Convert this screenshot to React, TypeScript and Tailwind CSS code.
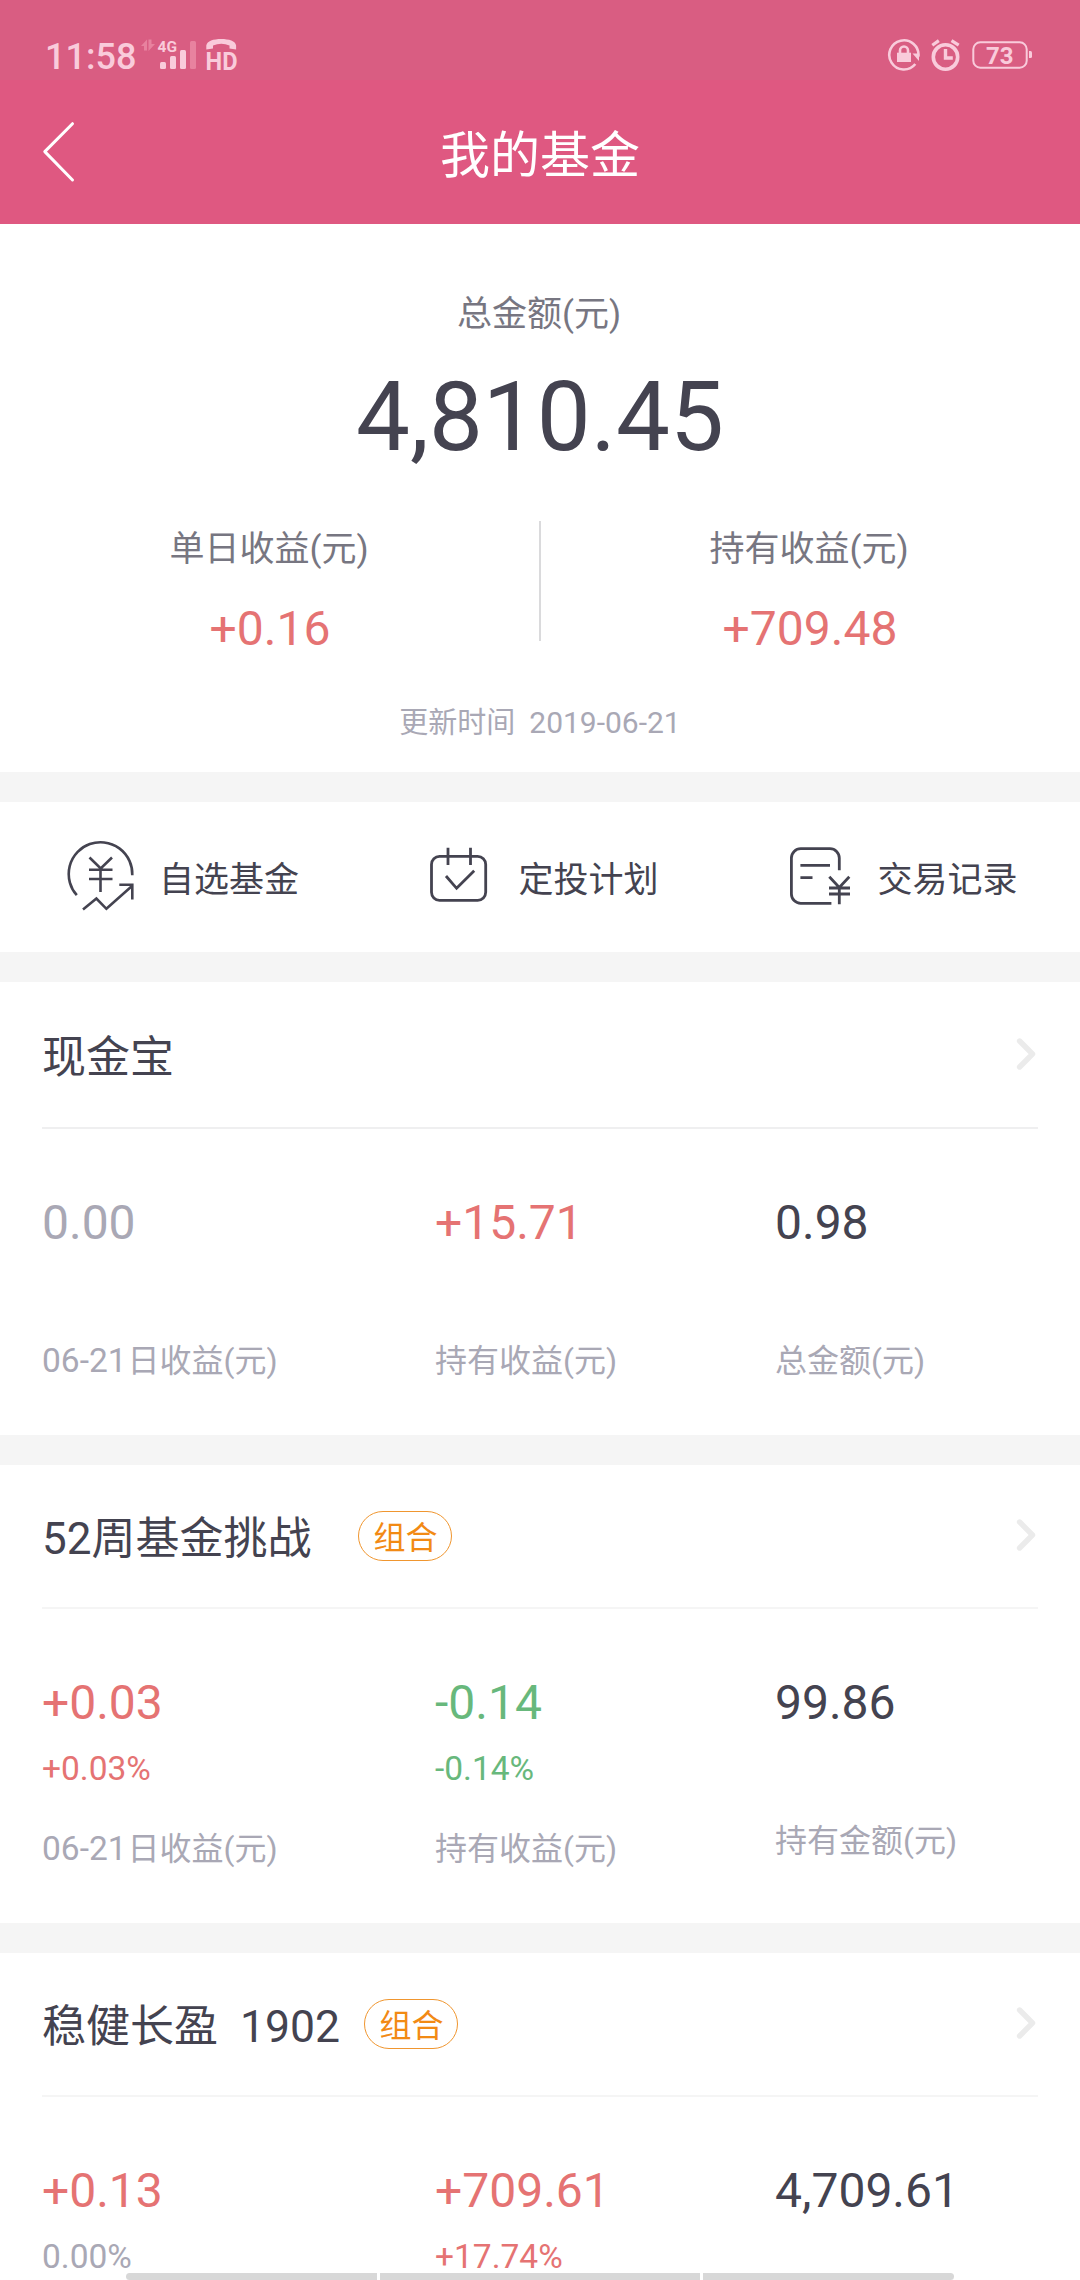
import React from "react";

type Tone = "up" | "down" | "flat" | "dark";

const toneClass: Record<Tone, string> = {
  up: "text-[#e57373]",
  down: "text-[#68b87c]",
  flat: "text-[#a9a8b5]",
  dark: "text-[#444350]",
};

interface Metric {
  value: string;
  tone: Tone;
  percent?: string;
  percentTone?: Tone;
  date?: string;
  label?: string;
}

function SignalIcon() {
  return (
    <svg width="58" height="46" viewBox="0 0 58 46" className="shrink-0">
      <g fill="#e8829f">
        <path d="M1 12L7 5.5V16.5H4V12Z" />
        <path d="M8.5 5.5H11.5V10H15L8.5 17Z" />
        <rect x="50" y="7" width="6" height="28" rx="1.5" />
      </g>
      <g fill="#f9cbdb">
        <text x="17.5" y="18" fontFamily="Roboto, sans-serif" fontWeight="700" fontSize="15.5">
          4G
        </text>
        <rect x="20" y="28" width="6" height="7" rx="1.5" />
        <rect x="30" y="22" width="6" height="13" rx="1.5" />
        <rect x="40" y="16" width="6" height="19" rx="1.5" />
      </g>
    </svg>
  );
}

function HdCallIcon() {
  return (
    <svg width="32" height="46" viewBox="0 0 32 46" className="shrink-0" fill="#f9cbdb">
      <path d="M0.3 15.5V11.5C1 7 7.5 5 15.2 5S29.6 7 30.1 11.5V15.5L23.5 14.5V11.5C18 9.3 12.5 9.3 7 11.5V14.5Z" />
      <text
        x="-0.5"
        y="35.8"
        fontFamily="Roboto, sans-serif"
        fontWeight="700"
        fontSize="26.5"
        textLength="32"
        lengthAdjust="spacingAndGlyphs"
      >
        HD
      </text>
    </svg>
  );
}

function RotationLockIcon() {
  return (
    <svg width="34" height="46" viewBox="0 0 34 46" className="shrink-0" fill="none" stroke="#f9cbdb">
      <path d="M31.4 22.5A14.6 14.6 0 1 0 28.3 30" strokeWidth="2.6" />
      <path d="M25.5 19.5H32V27Z" fill="#f9cbdb" stroke="none" />
      <rect x="10" y="18.7" width="14" height="9.3" fill="#f9cbdb" stroke="none" />
      <path d="M13 19V16.5A4 4 0 0 1 21 16.5V19" strokeWidth="2.6" />
    </svg>
  );
}

function AlarmIcon() {
  return (
    <svg width="30" height="46" viewBox="0 0 30 46" className="shrink-0" fill="none" stroke="#f9cbdb">
      <circle cx="14.5" cy="23" r="12.2" strokeWidth="3.6" />
      <path d="M14.5 15V24H21.8" strokeWidth="3.4" />
      <path d="M1.3 11.2L7.8 6.6M20.5 6.6L27.7 11.2" strokeWidth="3.2" />
    </svg>
  );
}

function BatteryIcon() {
  return (
    <svg width="62" height="46" viewBox="0 0 62 46" className="shrink-0">
      <rect x="2.3" y="8.3" width="53.4" height="25.4" rx="7" fill="none" stroke="#f9cbdb" strokeWidth="2" />
      <path d="M58 17H59.5Q61 17 61 18.5V22.5Q61 24 59.5 24H58Z" fill="#f9cbdb" />
      <text
        x="28.8"
        y="30"
        textAnchor="middle"
        fontFamily="Roboto, sans-serif"
        fontWeight="700"
        fontSize="24"
        fill="#f9cbdb"
      >
        73
      </text>
    </svg>
  );
}

function WatchlistIcon() {
  return (
    <svg width="78" height="78" viewBox="0 0 78 78" fill="none" stroke="#444350" strokeWidth="2.6">
      <path d="M71.3 38.3A31.8 31.8 0 1 0 15.8 58.2" />
      <path d="M28.5 20.5L39.7 31.5L51 20.5M28 32.7H51.5M28 42H51.5M39.5 31.5V55" />
      <path d="M22 72.5L35.4 61.5L45.4 71.8L71 49M58.3 47.7H71.3V62.5" />
    </svg>
  );
}

function PlanIcon() {
  return (
    <svg width="78" height="78" viewBox="0 0 78 78" fill="none" stroke="#444350" strokeWidth="2.8">
      <rect x="11.5" y="19.4" width="54.2" height="43.9" rx="8" />
      <path d="M28 10.7V28M50.5 10.7V28" />
      <path d="M26 39L36.6 51.3L54.2 33.7" />
    </svg>
  );
}

function RecordIcon() {
  return (
    <svg width="78" height="78" viewBox="0 0 78 78" fill="none" stroke="#444350" strokeWidth="2.8">
      <path d="M60.3 33.3V21A9.3 9.3 0 0 0 51 11.7H21.7A9.3 9.3 0 0 0 12.4 21V57A9.3 9.3 0 0 0 21.7 66.3H52.4" />
      <path d="M21.4 28.3H51M21.4 40.7H33.5" />
      <path d="M50.3 39.7L60.3 50.5L70.3 39.7M50 51H71M50 57H71M60.3 50V67.3" />
    </svg>
  );
}

function StatusBar() {
  return (
    <div className="flex h-20 items-start bg-[#d95d82] pt-[34px] text-[#f9cbdb]">
      <span className="w-[95px] pl-[45px] text-[36px] leading-[46px] font-medium whitespace-nowrap">11:58</span>
      <div className="ml-[45px] flex flex-1 gap-2">
        <SignalIcon />
        <HdCallIcon />
      </div>
      <div className="flex gap-[10px] pr-[47px]">
        <RotationLockIcon />
        <AlarmIcon />
        <BatteryIcon />
      </div>
    </div>
  );
}

function TitleBar() {
  return (
    <div className="grid h-36 grid-cols-[120px_1fr_120px] items-center bg-[#df5881]">
      <svg width="34" height="64" viewBox="0 0 34 64" className="ml-[42px]" fill="none" stroke="#fff">
        <path d="M30.5 3.7L2.8 31.6L30.5 60" strokeWidth="3" strokeLinecap="round" strokeLinejoin="round" />
      </svg>
      <h1 className="pt-[7px] text-center text-[50px] leading-[60px] text-white">我的基金</h1>
    </div>
  );
}

function SummaryColumn({ label, value }: { label: string; value: string }) {
  return (
    <div className="flex-1 text-center">
      <div className="pt-[9px] pr-[2px] text-[35px] leading-10 text-[#777681]">{label}</div>
      <div className="mt-[31px] text-[48px] leading-[56px] text-[#e57373]">{value}</div>
    </div>
  );
}

function Summary() {
  return (
    <section className="h-[548px] pt-[71px]">
      <div className="pr-[2px] text-center text-[35px] leading-10 text-[#777681]">总金额(元)</div>
      <div className="mt-[26px] text-center text-[96px] leading-[112px] text-[#444350]">4,810.45</div>
      <div className="mt-[48px] flex">
        <SummaryColumn label="单日收益(元)" value="+0.16" />
        <div className="-mx-px h-[120px] w-[2px] bg-[#dadadc]" />
        <SummaryColumn label="持有收益(元)" value="+709.48" />
      </div>
      <div className="mt-[46px] flex items-baseline justify-center gap-[14px] leading-10 text-[#a9a8b5]">
        <span className="text-[29px]">更新时间</span>
        <span className="text-[30px]">2019-06-21</span>
      </div>
    </section>
  );
}

function Action({ icon, label }: { icon: React.ReactNode; label: string }) {
  return (
    <div className="flex items-center justify-center gap-5">
      <div className="pb-[2px]">{icon}</div>
      <span className="pt-[7px] text-[35px] leading-10">{label}</span>
    </div>
  );
}

function MetricCell({ metric }: { metric: Metric }) {
  return (
    <div className="whitespace-nowrap">
      <div className={`text-[48px] leading-[56px] ${toneClass[metric.tone]}`}>{metric.value}</div>
      {metric.percent && (
        <div className={`mt-[18px] text-[33.5px] leading-10 ${toneClass[metric.percentTone ?? metric.tone]}`}>
          {metric.percent}
        </div>
      )}
      {metric.label && (
        <div className={`text-[32px] leading-10 text-[#a9a8b5] ${metric.percent ? "mt-10" : "mt-[90px]"}`}>
          {metric.date && <span className="pr-px text-[33.5px]">{metric.date}</span>}
          {metric.label}
        </div>
      )}
    </div>
  );
}

interface FundCardProps {
  title: React.ReactNode;
  headClass: string;
  tagClass?: string;
  metrics: Metric[];
}

function FundCard({ title, headClass, tagClass, metrics }: FundCardProps) {
  return (
    <section className="shrink-0 bg-white px-[42px] pb-[54px]">
      <div className={`flex items-center border-b-2 ${headClass}`}>
        <h2 className="pt-[6px] text-[44px] leading-[52px] whitespace-pre text-[#444350]">{title}</h2>
        {tagClass && (
          <span
            className={`h-[50px] w-[94px] rounded-full border border-[#f0962f] pt-[6px] pl-px text-center text-[32px] leading-10 text-[#f28a14] ${tagClass}`}
          >
            组合
          </span>
        )}
        <svg width="22" height="34" viewBox="0 0 22 34" className="mb-[2px] ml-auto" fill="none" stroke="#ebebeb">
          <path d="M3.6 4L16.5 17L3.6 30" strokeWidth="5.4" strokeLinecap="round" strokeLinejoin="round" />
        </svg>
      </div>
      <div className="grid grid-cols-[393px_340px_1fr] pt-[66px]">
        {metrics.map((m) => (
          <MetricCell key={m.value} metric={m} />
        ))}
      </div>
    </section>
  );
}

export default function App() {
  return (
    <div className="relative flex h-[2280px] w-[1080px] flex-col overflow-hidden bg-white font-['Roboto','Noto_Sans_CJK_SC',sans-serif]">
      <header className="shrink-0">
        <StatusBar />
        <TitleBar />
      </header>
      <main className="flex flex-col gap-[30px] bg-[#f5f5f5]">
        <div className="bg-white">
          <Summary />
        </div>
        <nav className="grid h-[150px] grid-cols-[360px_359px_359px] bg-white text-[#444350]">
          <Action icon={<WatchlistIcon />} label="自选基金" />
          <Action icon={<PlanIcon />} label="定投计划" />
          <Action icon={<RecordIcon />} label="交易记录" />
        </nav>
        <FundCard
          title="现金宝"
          headClass="h-[147px] border-[#efeff0]"
          metrics={[
            { value: "0.00", tone: "flat", date: "06-21", label: "日收益(元)" },
            { value: "+15.71", tone: "up", label: "持有收益(元)" },
            { value: "0.98", tone: "dark", label: "总金额(元)" },
          ]}
        />
        <FundCard
          title="52周基金挑战"
          headClass="h-[144px] border-[#f5f5f5]"
          tagClass="ml-[46.5px]"
          metrics={[
            { value: "+0.03", tone: "up", percent: "+0.03%", date: "06-21", label: "日收益(元)" },
            { value: "-0.14", tone: "down", percent: "-0.14%", label: "持有收益(元)" },
            { value: "99.86", tone: "dark", label: "持有金额(元)" },
          ]}
        />
        <FundCard
          title={
            <>
              稳健长盈<span className="text-[44.5px]">{"  1902"}</span>
            </>
          }
          headClass="h-[144px] border-[#f5f5f5]"
          tagClass="ml-[24px]"
          metrics={[
            { value: "+0.13", tone: "up", percent: "0.00%", percentTone: "flat" },
            { value: "+709.61", tone: "up", percent: "+17.74%" },
            { value: "4,709.61", tone: "dark" },
          ]}
        />
      </main>
      <div className="absolute inset-x-[126px] bottom-0 grid h-[7px] grid-cols-[251px_320px_251px] gap-[3px] bg-white">
        <span className="rounded-l-full bg-[#d8d8d8]" />
        <span className="bg-[#d8d8d8]" />
        <span className="rounded-r-full bg-[#d8d8d8]" />
      </div>
    </div>
  );
}
